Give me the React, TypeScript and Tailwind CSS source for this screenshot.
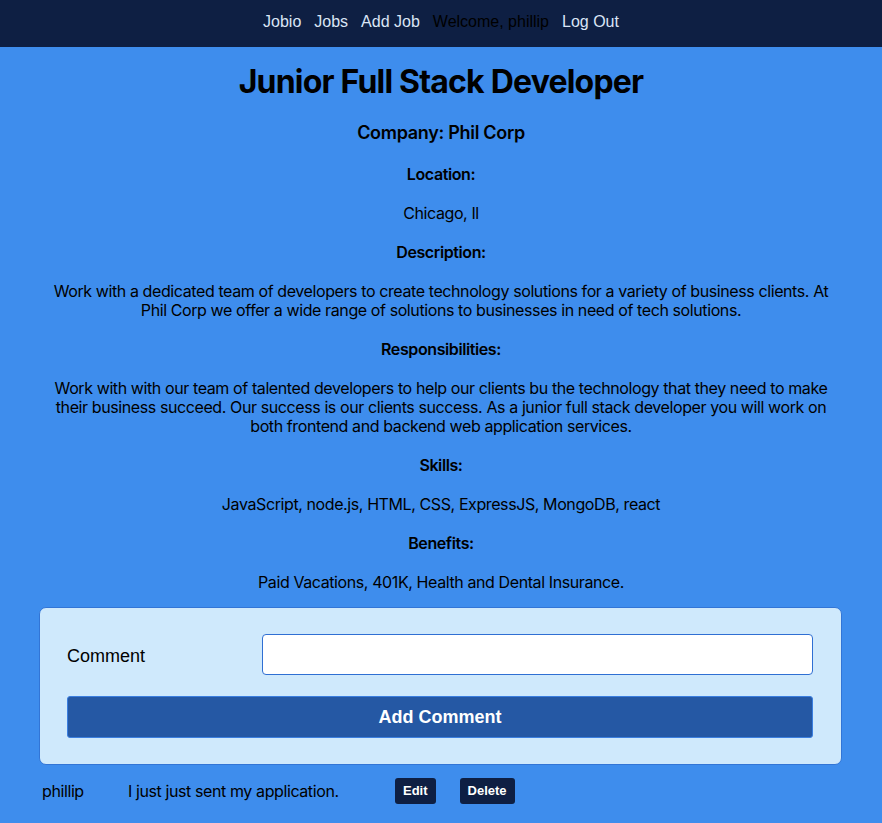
import React from 'react';

const sections = [
  { label: 'Location:', text: 'Chicago, Il' },
  {
    label: 'Description:',
    text: 'Work with a dedicated team of developers to create technology solutions for a variety of business clients. At Phil Corp we offer a wide range of solutions to businesses in need of tech solutions.',
  },
  {
    label: 'Responsibilities:',
    text: 'Work with with our team of talented developers to help our clients bu the technology that they need to make their business succeed. Our success is our clients success. As a junior full stack developer you will work on both frontend and backend web application services.',
  },
  { label: 'Skills:', text: 'JavaScript, node.js, HTML, CSS, ExpressJS, MongoDB, react' },
  { label: 'Benefits:', text: 'Paid Vacations, 401K, Health and Dental Insurance.' },
];

const Navbar = () => (
  <nav className="h-[47px] bg-[#0e1f43] flex items-center justify-center gap-[13px] pb-[3px] font-['Liberation_Sans',Arial,sans-serif] text-[16px] text-[#dae5f6]">
    <span>Jobio</span>
    <span>Jobs</span>
    <span>Add Job</span>
    <span className="text-black">Welcome, phillip</span>
    <span>Log Out</span>
  </nav>
);

const App = () => {
  return (
    <div className="min-h-[823px] bg-[#3e8ded] text-black font-['Inter',sans-serif]">
      <Navbar />
      <main className="flex flex-col items-center px-[40px] text-center">
        <h1 className="mt-[16px] text-[32px] leading-[38px] font-bold tracking-[-0.8px]">Junior Full Stack Developer</h1>
        <h2 className="mt-[21px] text-[18px] leading-[22px] font-semibold tracking-[-0.3px]">Company: Phil Corp</h2>
        <div className="mt-[21px] flex flex-col gap-[20px] text-[16px] leading-[19px] tracking-[-0.4px]">
          {sections.map((s) => (
            <React.Fragment key={s.label}>
              <h4 className="font-semibold">{s.label}</h4>
              <p>{s.text}</p>
            </React.Fragment>
          ))}
        </div>
      </main>
      <div className="ml-[39px] mr-[40px] mt-[15px] rounded-[7px] border border-[#3275d6] bg-[#cfe9fc] pl-[27px] pr-[28px] pt-[26px] pb-[26px] font-['Liberation_Sans',Arial,sans-serif]">
        <div className="flex items-center">
          <label className="w-[195px] pt-[4px] text-[18px]">Comment</label>
          <input className="flex-1 h-[41px] rounded-[4px] border border-[#2f6fd3] bg-white" />
        </div>
        <button className="mt-[21px] w-full h-[42px] rounded-[3px] border border-[#3b7fe0] bg-[#2558a4] text-white text-[18px] font-bold">
          Add Comment
        </button>
      </div>
      <div className="flex items-center mt-[13px] pl-[42px] text-[16px] tracking-[-0.4px]">
        <span className="w-[86px]">phillip</span>
        <span className="w-[267px]">I just just sent my application.</span>
        <button className="h-[26px] px-[8px] rounded-[3px] bg-[#0e1f43] text-white text-[13px] font-bold tracking-normal font-['Liberation_Sans',Arial,sans-serif]">Edit</button>
        <button className="ml-[24px] h-[26px] px-[8px] rounded-[3px] bg-[#0e1f43] text-white text-[13px] font-bold tracking-normal font-['Liberation_Sans',Arial,sans-serif]">Delete</button>
      </div>
    </div>
  );
};

export default App;
